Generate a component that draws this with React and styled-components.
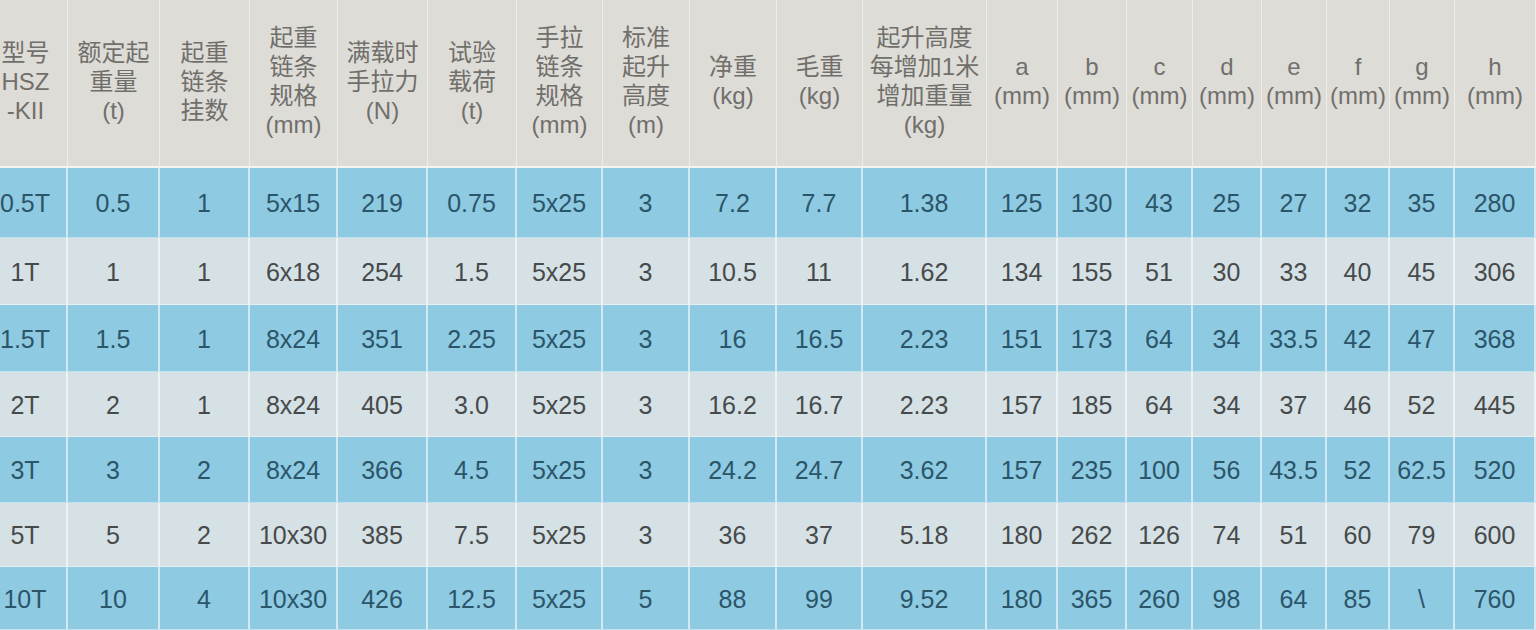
import React from "react";
import styled, { createGlobalStyle } from "styled-components";

const GlobalStyle = createGlobalStyle`
    html, body {
        margin: 0;
        padding: 0;
        background: #dedcd7;
        overflow: hidden;
    }
`;

const widths = [84, 92, 90, 88, 90, 89, 86, 87, 87, 86, 124, 71, 69, 66, 69, 65, 63, 65, 81];
const rowHeights = [70, 67, 67, 65, 66, 64, 63];

const headers = [
    ["型号", "HSZ", "-KII"],
    ["额定起", "重量", "(t)"],
    ["起重", "链条", "挂数"],
    ["起重", "链条", "规格", "(mm)"],
    ["满载时", "手拉力", "(N)"],
    ["试验", "载荷", "(t)"],
    ["手拉", "链条", "规格", "(mm)"],
    ["标准", "起升", "高度", "(m)"],
    ["净重", "(kg)"],
    ["毛重", "(kg)"],
    ["起升高度", "每增加1米", "增加重量", "(kg)"],
    ["a", "(mm)"],
    ["b", "(mm)"],
    ["c", "(mm)"],
    ["d", "(mm)"],
    ["e", "(mm)"],
    ["f", "(mm)"],
    ["g", "(mm)"],
    ["h", "(mm)"],
];

const rows = [
    ["0.5T", "0.5", "1", "5x15", "219", "0.75", "5x25", "3", "7.2", "7.7", "1.38", "125", "130", "43", "25", "27", "32", "35", "280"],
    ["1T", "1", "1", "6x18", "254", "1.5", "5x25", "3", "10.5", "11", "1.62", "134", "155", "51", "30", "33", "40", "45", "306"],
    ["1.5T", "1.5", "1", "8x24", "351", "2.25", "5x25", "3", "16", "16.5", "2.23", "151", "173", "64", "34", "33.5", "42", "47", "368"],
    ["2T", "2", "1", "8x24", "405", "3.0", "5x25", "3", "16.2", "16.7", "2.23", "157", "185", "64", "34", "37", "46", "52", "445"],
    ["3T", "3", "2", "8x24", "366", "4.5", "5x25", "3", "24.2", "24.7", "3.62", "157", "235", "100", "56", "43.5", "52", "62.5", "520"],
    ["5T", "5", "2", "10x30", "385", "7.5", "5x25", "3", "36", "37", "5.18", "180", "262", "126", "74", "51", "60", "79", "600"],
    ["10T", "10", "4", "10x30", "426", "12.5", "5x25", "5", "88", "99", "9.52", "180", "365", "260", "98", "64", "85", "\\", "760"],
];

const tones = {
    head: { bg: "#dedcd7", fg: "#716f6c" },
    blue: { bg: "#8ecae2", fg: "#2b5569" },
    light: { bg: "#d6e1e5", fg: "#474a4b" },
};

const Sheet = styled.div`
    display: grid;
    grid-template-columns: ${widths.map((w) => `${w}px`).join(" ")};
    grid-template-rows: 168px ${rowHeights.map((h) => `${h}px`).join(" ")};
    width: max-content;
    margin-left: -16px;
    font-family: "Liberation Sans", "Noto Sans CJK SC", Arial, sans-serif;
`;

const HeadCell = styled.div`
    display: flex;
    flex-direction: column;
    align-items: center;
    justify-content: center;
    padding-bottom: 4px;
    background: ${tones.head.bg};
    color: ${tones.head.fg};
    font-family: "Liberation Sans", "Noto Sans CJK SC", sans-serif;
    font-size: 24px;
    line-height: 29px;
    text-align: center;
    white-space: nowrap;
    border-right: 1px solid rgba(255, 255, 255, 0.5);
    border-bottom: 2px solid rgba(255, 255, 255, 0.7);
    box-sizing: border-box;
`;

const Cell = styled.div`
    display: flex;
    align-items: center;
    justify-content: center;
    padding-top: 2px;
    background: ${({ $tone }) => tones[$tone].bg};
    color: ${({ $tone }) => tones[$tone].fg};
    font-size: 25px;
    white-space: nowrap;
    border-right: 2px solid rgba(255, 255, 255, 0.6);
    border-bottom: 1px solid rgba(255, 255, 255, 0.45);
    box-sizing: border-box;
`;

export default function App() {
    return (
        <>
            <GlobalStyle />
            <Sheet>
                {headers.map((lines, i) => (
                    <HeadCell key={`h${i}`}>
                        {lines.map((line, j) => (
                            <span key={j}>{line}</span>
                        ))}
                    </HeadCell>
                ))}
                {rows.map((row, r) =>
                    row.map((value, c) => (
                        <Cell key={`${r}-${c}`} $tone={r % 2 === 0 ? "blue" : "light"}>
                            {value}
                        </Cell>
                    ))
                )}
            </Sheet>
        </>
    );
}
